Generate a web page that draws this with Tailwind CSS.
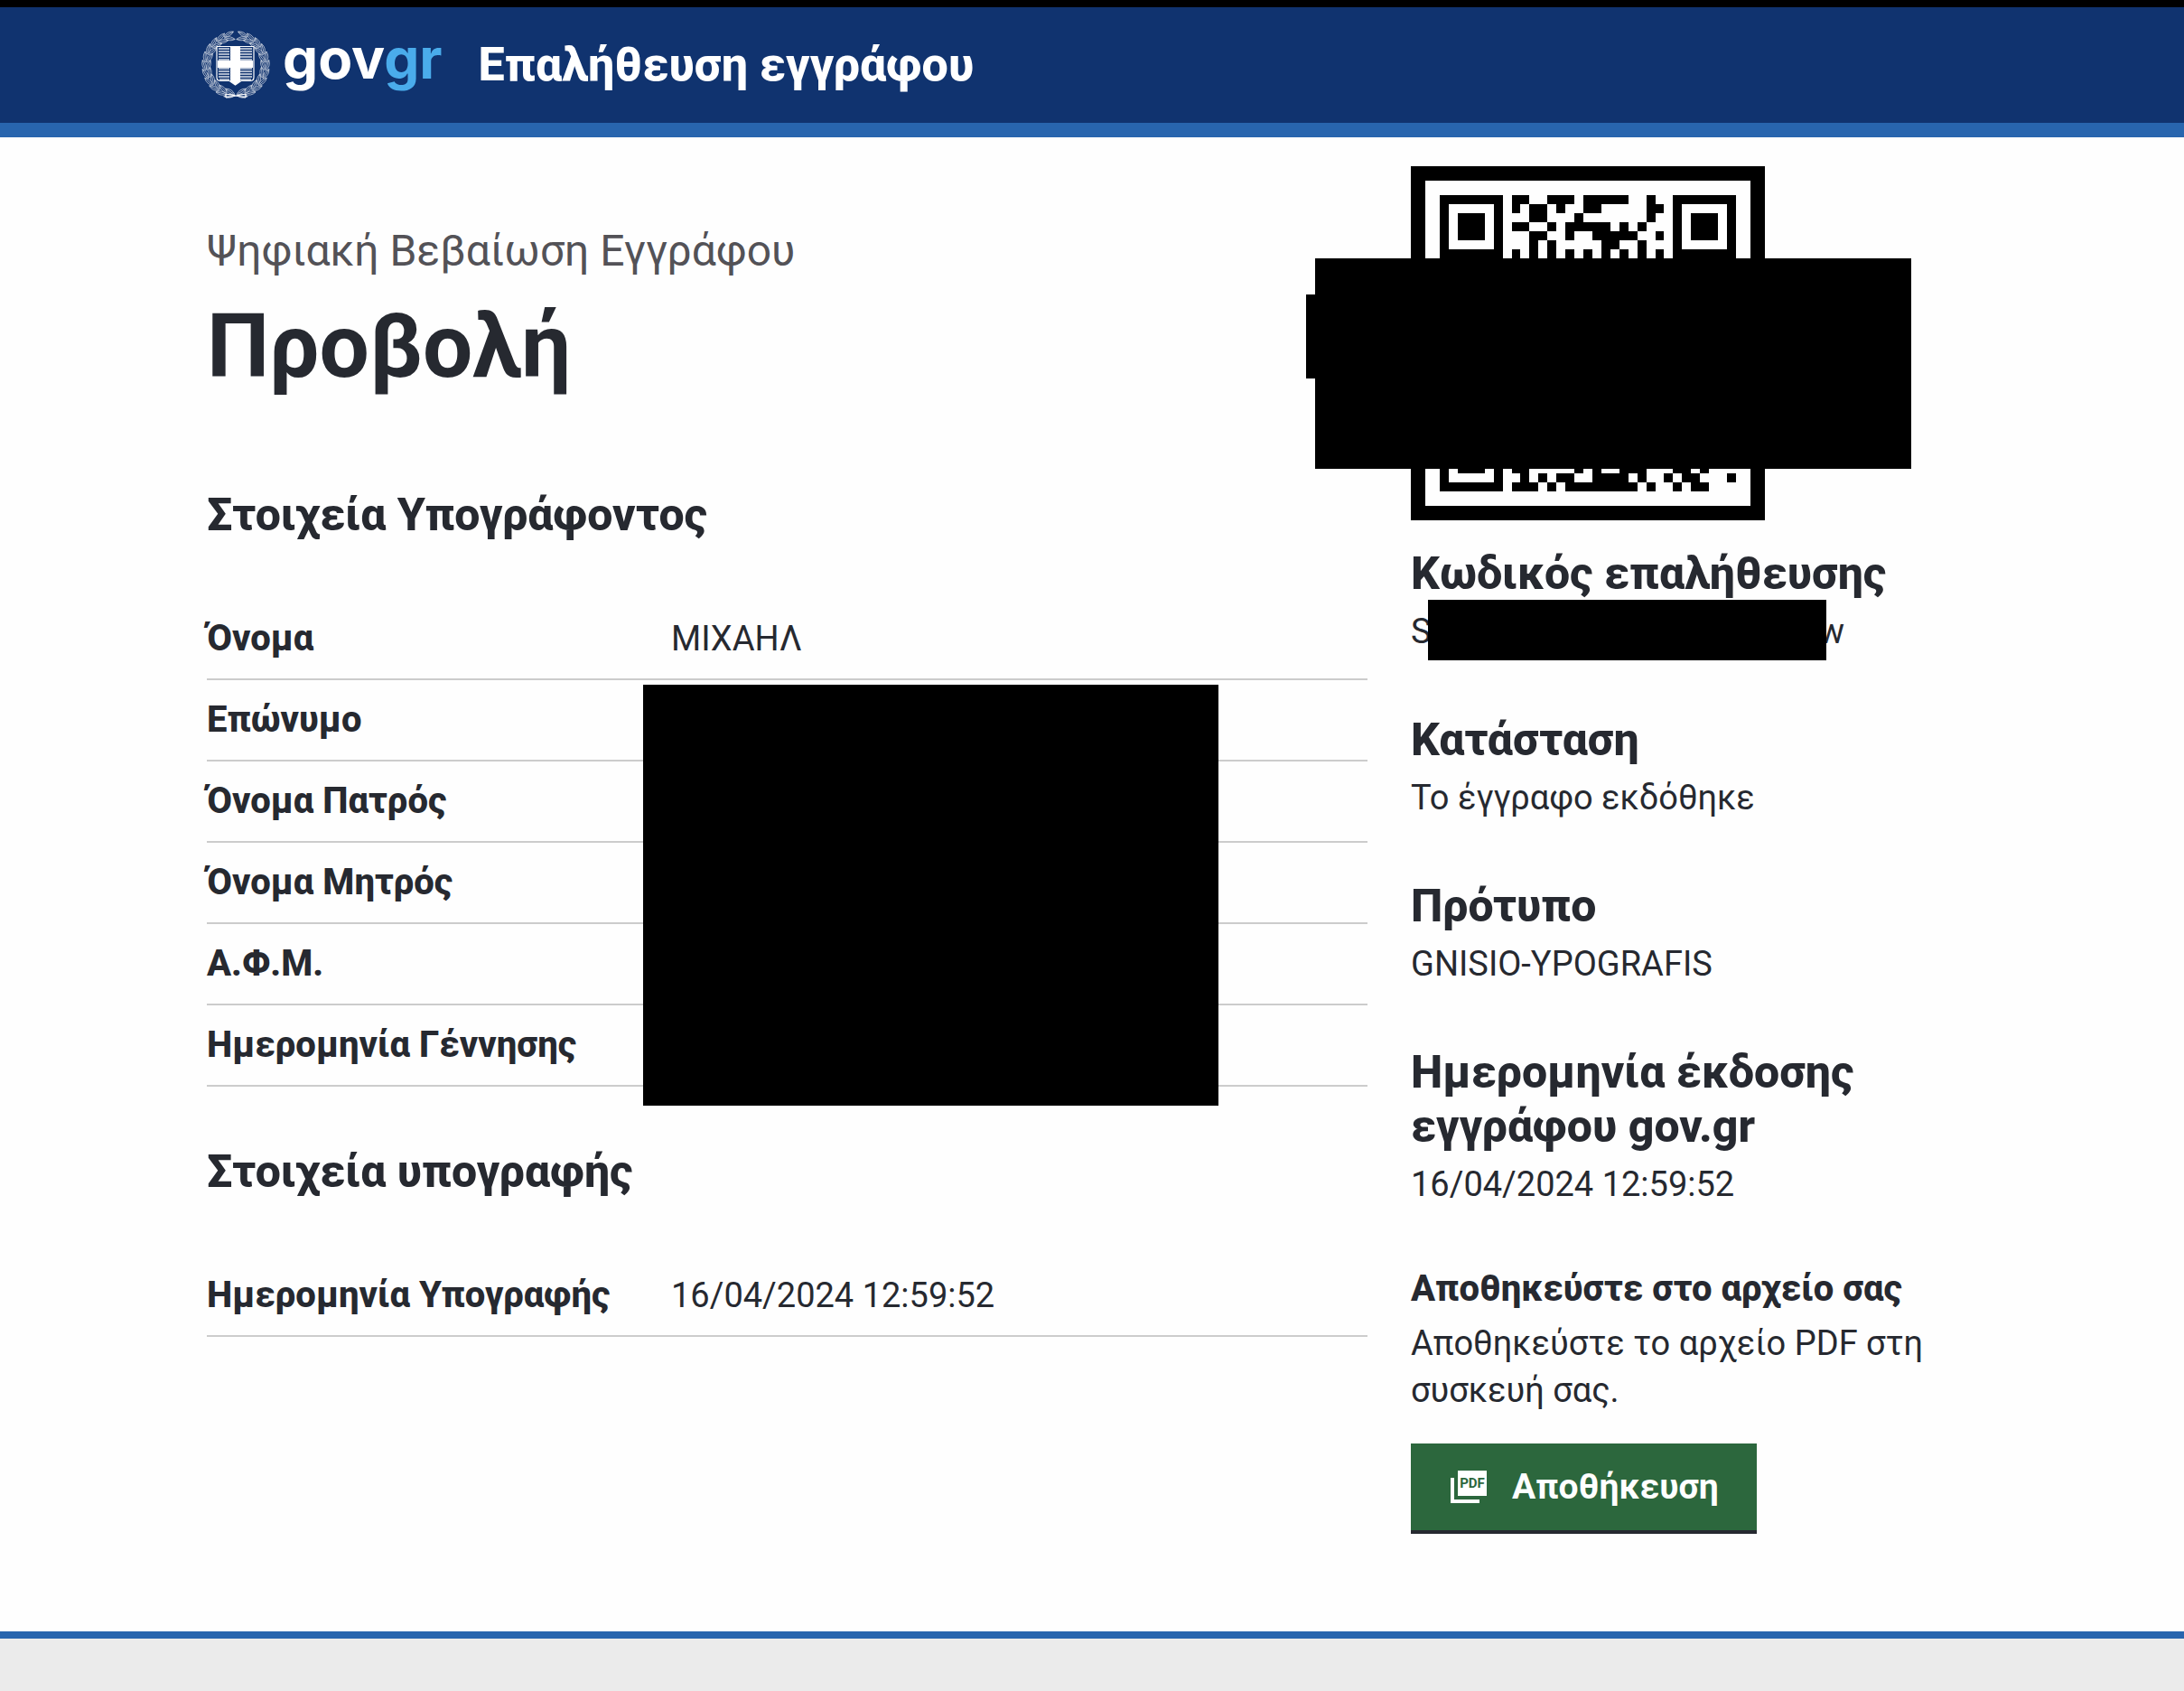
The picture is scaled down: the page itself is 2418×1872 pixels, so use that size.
<!DOCTYPE html>
<html lang="el">
<head>
<meta charset="utf-8">
<meta name="viewport" content="width=device-width, initial-scale=1">
<title>Επαλήθευση εγγράφου</title>
<script src="https://cdn.jsdelivr.net/npm/@tailwindcss/browser@4"></script>
</head>
<body class="flex min-h-screen flex-col bg-[#fefefe] font-['Roboto',sans-serif] text-[38px] leading-[52px] text-[#262930]">
<header class="border-t-8 border-b-16 border-t-black border-b-[#2865ae] bg-[#10336f]">
  <div class="mx-auto flex h-32 w-full max-w-[1972px] items-center">
    <a href="#" class="flex items-center gap-3.5" aria-label="gov.gr">
      <svg id="emblem" class="size-[76px]" viewBox="0 0 76 76" fill="none" stroke="#fff" aria-hidden="true">
        <g id="wreath" stroke-width="0.7" opacity="0.8"></g>
        <path d="M17 17.500h41v34q0 4-4 4H44l-6.500 4.500-6.500-4.500H21q-4 0-4-4z" fill="#10336f" stroke-width="1.200"/>
        <path d="M19 20h12M19 23h12M19 26h12M19 29h12M19 32h12M43 20h13M43 23h13M43 26h13M43 29h13M43 32h13M19 42h12M19 45h12M19 48h12M19 51h12M20 54h11M43 42h13M43 45h13M43 48h13M43 51h13M43 54h12" stroke-width="1.700" opacity="0.85"/>
        <path d="M32 17.500h11V33h14v8H43v15l-5.500 4-5.500-4V41H18v-8h14z" fill="#fff" stroke="none"/>
        <path d="M27 70l22 4M49 70l-22 4M27 70v4M49 70v4" stroke-width="1.200"/>
      </svg>
      <span class="pb-3.5 font-['Inter',sans-serif] text-[62px] leading-[72px] font-bold text-white">gov<span class="text-[#4aaceb]">gr</span></span>
    </a>
    <span class="ml-10 text-[52px] leading-[60px] font-extrabold text-white">Επαλήθευση εγγράφου</span>
  </div>
</header>

<main class="mx-auto flex w-full max-w-[1960px] grow gap-12 pt-8 pb-27">
  <div class="min-w-0 flex-1 pt-16">
    <h1>
      <span class="block text-[48px] leading-[60px] text-[#535257]">Ψηφιακή Βεβαίωση Εγγράφου</span>
      <span class="mt-5 block text-[98px] leading-[112px] font-bold">Προβολή</span>
    </h1>
    <h2 class="mt-[100px] text-[50px] leading-[60px] font-extrabold">Στοιχεία Υπογράφοντος</h2>
    <div class="relative mt-[62px]">
      <table class="w-full table-fixed border-collapse text-left">
        <tbody>
          <tr class="h-[90px] border-b-2 border-[#ccc]"><th class="w-2/5 text-[40px] font-extrabold" scope="row">Όνομα</th><td>ΜΙΧΑΗΛ</td></tr>
          <tr class="h-[90px] border-b-2 border-[#ccc]"><th class="text-[40px] font-extrabold" scope="row">Επώνυμο</th><td></td></tr>
          <tr class="h-[90px] border-b-2 border-[#ccc]"><th class="text-[40px] font-extrabold" scope="row">Όνομα Πατρός</th><td></td></tr>
          <tr class="h-[90px] border-b-2 border-[#ccc]"><th class="text-[40px] font-extrabold" scope="row">Όνομα Μητρός</th><td></td></tr>
          <tr class="h-[90px] border-b-2 border-[#ccc]"><th class="text-[40px] font-extrabold" scope="row">Α.Φ.Μ.</th><td></td></tr>
          <tr class="h-[90px] border-b-2 border-[#ccc]"><th class="text-[40px] font-extrabold" scope="row">Ημερομηνία Γέννησης</th><td></td></tr>
        </tbody>
      </table>
      <div class="absolute top-24 left-[483px] h-[466px] w-[637px] bg-black"></div>
    </div>
    <h2 class="mt-16 text-[50px] leading-[60px] font-extrabold">Στοιχεία υπογραφής</h2>
    <table class="mt-[62px] w-full table-fixed border-collapse text-left">
      <tbody>
        <tr class="h-[90px] border-b-2 border-[#ccc]"><th class="w-2/5 text-[40px] font-extrabold" scope="row">Ημερομηνία Υπογραφής</th><td>16/04/2024 12:59:52</td></tr>
      </tbody>
    </table>
  </div>

  <aside class="w-[627px] shrink-0">
    <div class="relative">
      <svg id="qr" class="size-[392px] border-16 border-black p-4" viewBox="0 0 33 33" shape-rendering="crispEdges" role="img" aria-label="QR"></svg>
      <div class="absolute top-[102px] -left-[106px] h-[233px] w-[660px] bg-black"></div>
      <div class="absolute top-[142px] -left-[116px] h-[93px] w-[10px] bg-black"></div>
    </div>
    <section class="mt-[29px]">
      <h2 class="text-[50px] leading-[60px] font-extrabold">Κωδικός επαλήθευσης</h2>
      <p class="mt-2 flex h-[52px] items-start"><span>S</span><span class="z-10 -mt-[9px] -ml-1 h-[67px] w-[441px] bg-black"></span><span class="-ml-2">w</span></p>
    </section>
    <section class="mt-16">
      <h2 class="text-[50px] leading-[60px] font-extrabold">Κατάσταση</h2>
      <p class="mt-2">Το έγγραφο εκδόθηκε</p>
    </section>
    <section class="mt-16">
      <h2 class="text-[50px] leading-[60px] font-extrabold">Πρότυπο</h2>
      <p class="mt-2">GNISIO-YPOGRAFIS</p>
    </section>
    <section class="mt-16">
      <h2 class="text-[50px] leading-[60px] font-extrabold">Ημερομηνία έκδοσης εγγράφου gov.gr</h2>
      <p class="mt-2">16/04/2024 12:59:52</p>
    </section>
    <section class="mt-16">
      <h3 class="text-[40px] font-extrabold">Αποθηκεύστε στο αρχείο σας</h3>
      <p class="mt-2">Αποθηκεύστε το αρχείο PDF στη συσκευή σας.</p>
      <button type="button" class="mt-[33px] flex h-[100px] items-center gap-7 border-b-4 border-[#262930] bg-[#2c673d] pr-[42px] pl-11 text-[39px] font-bold text-white">
        <svg class="h-9 w-10" viewBox="0 0 40 36" fill="#fff" aria-hidden="true">
          <path d="M8 0h32v28H8zM0 8h4v24h28v4H0z"/>
          <text x="24" y="19" text-anchor="middle" font-family="Roboto" font-weight="700" font-size="15" fill="#2c673d">PDF</text>
        </svg>
        <span>Αποθήκευση</span>
      </button>
    </section>
  </aside>
</main>
<footer class="h-[66px] border-t-8 border-[#2865ae] bg-[#ebebeb]"></footer>

<script>
  const svgNs = 'http://www.w3.org/2000/svg';

  // Laurel leaves: two mirrored branches around the shield
  const wreath = document.getElementById('wreath');
  for (const side of [-1, 1]) {
    for (let i = 0; i < 11; i++) {
      const angle = 168 - i * 15.5;
      for (const [radius, tilt] of [[35, 16], [30, -20]]) {
        const leaf = document.createElementNS(svgNs, 'path');
        leaf.setAttribute('d', 'M-6 0Q0-4 6 0Q0 4-6 0ZM-6 0H4');
        leaf.setAttribute('transform', `translate(38 38) scale(${side} 1) rotate(${angle}) translate(0 ${-radius}) rotate(${tilt})`);
        wreath.append(leaf);
      }
    }
  }

  // QR modules, listed as [row, columns]
  const modules = [
    [0, [8, 9, 12, 13, 14, 16, 17, 18, 19, 20, 23]],
    [1, [8, 10, 11, 13, 16, 17, 23, 24]],
    [2, [10, 11, 15, 23]],
    [3, [8, 9, 12, 14, 15, 16, 17, 18, 20, 22]],
    [4, [10, 11, 14, 17, 18, 19, 20, 21, 24]],
    [5, [10, 12, 18, 19, 22]],
    [6, [8, 10, 12, 14, 16, 18, 20, 22, 24]],
    [30, [8, 9, 15, 17, 20, 21, 22, 26, 27, 29]],
    [31, [9, 11, 13, 14, 17, 18, 19, 20, 22, 25, 27, 28, 32]],
    [32, [8, 9, 10, 12, 14, 15, 16, 17, 18, 19, 20, 21, 23, 26, 28, 29]]
  ];
  let d = '';
  for (const [x, y] of [[0, 0], [26, 0], [0, 26]]) {
    d += `M${x} ${y}h7v7h-7zM${x + 1} ${y + 1}v5h5v-5zM${x + 2} ${y + 2}h3v3h-3z`;
  }
  for (const [row, cols] of modules) for (const col of cols) d += `M${col} ${row}h1v1h-1z`;
  const path = document.createElementNS(svgNs, 'path');
  path.setAttribute('d', d);
  document.getElementById('qr').append(path);
</script>
</body>
</html>
